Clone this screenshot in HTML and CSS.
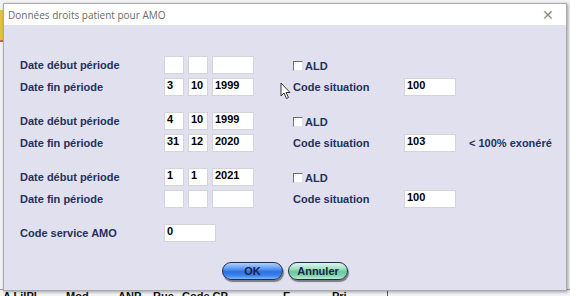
FILE: index.html
```html
<!DOCTYPE html>
<html lang="fr">
<head>
    <meta charset="UTF-8">
    <title>Données droits patient pour AMO</title>
    <link rel="stylesheet" href="styles.css">
</head>
<body>

    <!-- application behind the dialog -->
    <div class="backdrop">
        <div class="app-tab"></div>
        <div class="app-header">
            <span class="c1">A LiIPl</span>
            <span class="c2">Mod</span>
            <span class="c3">ANP</span>
            <span class="c4">Rue</span>
            <span class="c5">Code CP</span>
            <span class="c6">E</span>
            <span class="c7">Pri</span>
        </div>
    </div>

    <div class="dialog">
        <div class="titlebar">
            <span class="title">Données droits patient pour AMO</span>
            <span class="close">&#x2715;</span>
        </div>

        <div class="content">
            <div class="group">
                <div class="row">
                    <span class="label">Date début période</span>
                    <div class="date">
                        <input class="dd" value="">
                        <input class="mm" value="">
                        <input class="yy" value="">
                    </div>
                    <label class="ald"><span class="check"></span>ALD</label>
                </div>
                <div class="row">
                    <span class="label">Date fin période</span>
                    <div class="date">
                        <input class="dd" value="3">
                        <input class="mm" value="10">
                        <input class="yy" value="1999">
                    </div>
                    <span class="rlabel">Code situation</span>
                    <input class="code" value="100">
                </div>
            </div>

            <div class="group">
                <div class="row">
                    <span class="label">Date début période</span>
                    <div class="date">
                        <input class="dd" value="4">
                        <input class="mm" value="10">
                        <input class="yy" value="1999">
                    </div>
                    <label class="ald"><span class="check"></span>ALD</label>
                </div>
                <div class="row">
                    <span class="label">Date fin période</span>
                    <div class="date">
                        <input class="dd" value="31">
                        <input class="mm" value="12">
                        <input class="yy" value="2020">
                    </div>
                    <span class="rlabel">Code situation</span>
                    <input class="code" value="103">
                    <span class="note">&lt; 100% exonéré</span>
                </div>
            </div>

            <div class="group">
                <div class="row">
                    <span class="label">Date début période</span>
                    <div class="date">
                        <input class="dd" value="1">
                        <input class="mm" value="1">
                        <input class="yy" value="2021">
                    </div>
                    <label class="ald"><span class="check"></span>ALD</label>
                </div>
                <div class="row">
                    <span class="label">Date fin période</span>
                    <div class="date">
                        <input class="dd" value="">
                        <input class="mm" value="">
                        <input class="yy" value="">
                    </div>
                    <span class="rlabel">Code situation</span>
                    <input class="code" value="100">
                </div>
            </div>

            <div class="row">
                <span class="label">Code service AMO</span>
                <input class="service" value="0">
            </div>

            <div class="buttons">
                <button class="btn btn-ok">OK</button>
                <button class="btn btn-cancel">Annuler</button>
            </div>
        </div>

        <!-- mouse pointer -->
        <svg class="cursor" width="12" height="18" viewBox="0 0 12 18">
            <path d="M1 1 L1 14 L4 11 L6.5 16.5 L8.5 15.5 L6 10.5 L10 10.5 Z" fill="#fff" stroke="#333" stroke-width="1" stroke-linejoin="round"/>
        </svg>
    </div>

</body>
</html>
```

FILE: styles.css
```css
body {
    margin: 0;
    width: 570px;
    height: 296px;
    overflow: hidden;
    background-color: #f3f3f3;
    font-family: "Liberation Sans", Arial, sans-serif;
    position: relative;
}

.backdrop {
    height: 296px;
    display: flex;
    flex-direction: column;
    justify-content: space-between;
}

.app-tab {
    margin-top: 10px;
    width: 6px;
    height: 30px;
    background-color: #e6c33a;
    border-bottom: 2px solid #d2604a;
}

.app-header {
    position: relative;
    height: 6px;
    font-size: 11px;
    font-weight: bold;
    color: #111;
    line-height: 12px;
    overflow: hidden;
    border-top: 1px solid #9a9a9a;
}

.app-header span {
    position: absolute;
    top: 0;
}

.app-header .c1 { left: 3px; }
.app-header .c2 { left: 66px; }
.app-header .c3 { left: 118px; }
.app-header .c4 { left: 153px; }
.app-header .c5 { left: 182px; }
.app-header .c6 { left: 283px; }
.app-header .c7 { left: 332px; border-right: 1px solid #555; padding-right: 40px; }

/* dialog window */
.dialog {
    position: absolute;
    top: 3px;
    left: 3px;
    width: 562px;
    height: 286px;
    border: 1px solid #a9a9b0;
    background-color: #e1e0ee;
    box-shadow: 1px 1px 3px rgba(0, 0, 0, 0.35);
}

.titlebar {
    height: 21px;
    background-color: #fff;
    display: flex;
    align-items: center;
    justify-content: space-between;
    padding: 0 12px 0 4px;
}

.title {
    font-family: "Open Sans", sans-serif;
    font-size: 10px;
    color: #6b6b6b;
}

.close {
    font-size: 14px;
    font-weight: 300;
    color: #8a8a8a;
}

.content {
    padding: 31px 0 0 16px;
    display: flex;
    flex-direction: column;
    gap: 16px;
}

.group {
    display: flex;
    flex-direction: column;
    gap: 4px;
}

.row {
    display: flex;
    align-items: center;
    height: 18px;
    font-size: 11px;
    font-weight: bold;
    color: #25305c;
}

.label {
    width: 144px;
}

.date {
    display: flex;
    gap: 4px;
    width: 129px;
}

input {
    box-sizing: border-box;
    height: 18px;
    margin: 0;
    padding: 0 0 5px 2px;
    border: 1px solid #d3d3dc;
    background-color: #fff;
    font-family: "Liberation Sans", Arial, sans-serif;
    font-size: 11px;
    font-weight: bold;
    color: #000;
}

.dd, .mm {
    width: 20px;
}

.yy {
    width: 42px;
}

.code, .service {
    width: 52px;
}

.ald {
    display: flex;
    align-items: center;
    margin-top: 1px;
}

.check {
    box-sizing: border-box;
    width: 10px;
    height: 10px;
    margin-right: 2px;
    background-color: #fff;
    border-top: 1px solid #6e6e6e;
    border-left: 1px solid #6e6e6e;
    border-right: 1px solid #e4e4e4;
    border-bottom: 1px solid #e4e4e4;
}

.rlabel {
    width: 111px;
}

.note {
    margin-left: 13px;
}

.buttons {
    display: flex;
    justify-content: center;
    gap: 5px;
    margin-top: 4px;
    margin-left: -16px;
}

.btn {
    height: 18px;
    padding: 0;
    border: 1px solid #1f2d4a;
    border-radius: 9px;
    font-family: "Liberation Sans", Arial, sans-serif;
    font-size: 11px;
    font-weight: bold;
    color: #1b2547;
    box-shadow: 1px 2px 1px rgba(0, 0, 0, 0.45);
}

.btn-ok {
    width: 61px;
    background: linear-gradient(#b4d2ff 0%, #5a9cf2 35%, #2f6fe0 55%, #3c86f0 80%, #7fb6ff 100%);
}

.btn-cancel {
    width: 60px;
    background: linear-gradient(#dcf6ea 0%, #a4e2c4 35%, #6cc89e 55%, #86d6b0 80%, #bdeed6 100%);
}

.cursor {
    position: absolute;
    left: 276px;
    top: 78px;
}
```
